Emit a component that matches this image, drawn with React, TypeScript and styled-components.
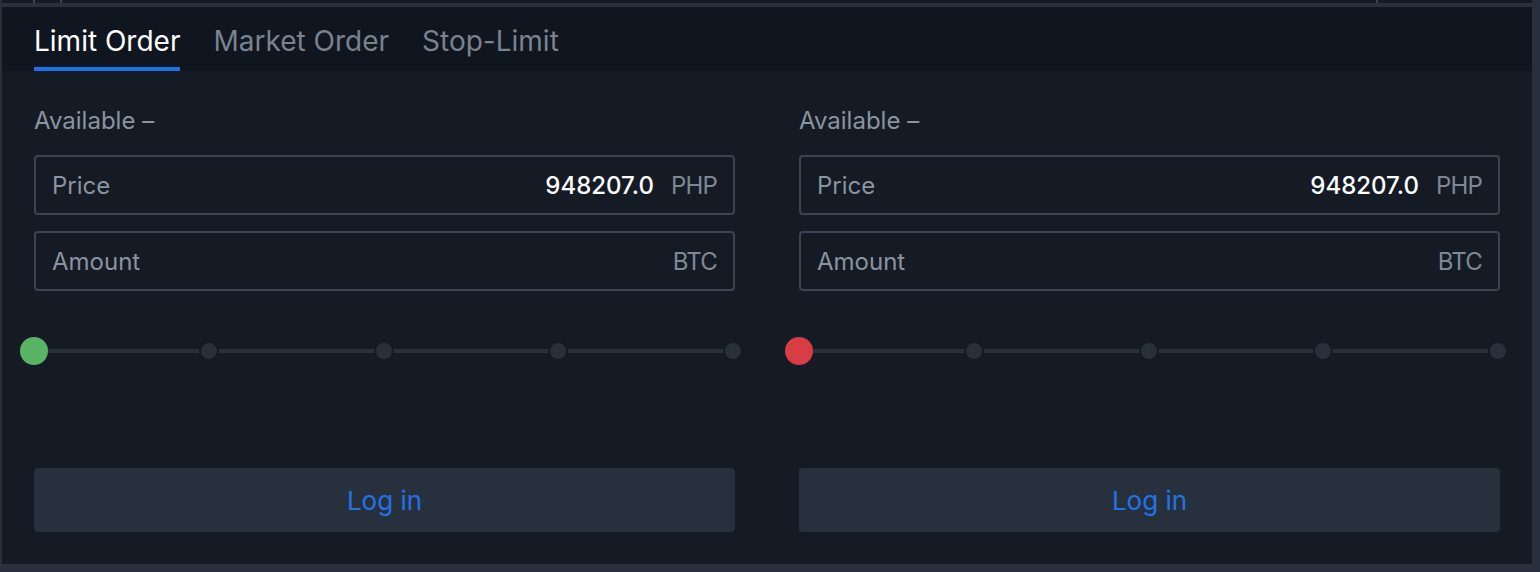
import React from "react"
import styled, { createGlobalStyle } from "styled-components"

const GlobalStyle = createGlobalStyle`
  html, body {
    margin: 0;
    padding: 0;
    background: #27303c;
    font-family: Inter, "Noto Sans", "Liberation Sans", sans-serif;
  }
  * {
    box-sizing: border-box;
  }
`

const tabs = ["Limit Order", "Market Order", "Stop-Limit"]

const OrderColumn: React.FC<{ side: "buy" | "sell" }> = ({ side }) => {
  return (
    <Column>
      <Available>Available –</Available>
      <Field>
        <FieldLabel>Price</FieldLabel>
        <FieldValue>948207.0</FieldValue>
        <FieldUnit>PHP</FieldUnit>
      </Field>
      <Field $gap>
        <FieldLabel>Amount</FieldLabel>
        <FieldUnit>BTC</FieldUnit>
      </Field>
      <Track>
        <Thumb $side={side} />
        <Stop />
        <Stop />
        <Stop />
        <Stop />
      </Track>
      <LoginBtn>Log in</LoginBtn>
    </Column>
  )
}

const App: React.FC = () => {
  return (
    <Page>
      <GlobalStyle />
      <TopStrip>
        <Mark $left={31} />
        <Mark $left={25} />
        <Mark $left={1314} />
      </TopStrip>
      <Panel>
        <TabBar>
          {tabs.map((t, i) => (
            <Tab key={t} $active={i === 0}>
              {t}
            </Tab>
          ))}
        </TabBar>
        <Body>
          <OrderColumn side="buy" />
          <OrderColumn side="sell" />
        </Body>
      </Panel>
    </Page>
  )
}

const Page = styled.div`
  width: 1540px;
  height: 572px;
  padding: 0 8px 8px 2px;
  display: flex;
  flex-direction: column;
  gap: 4px;
  background: #27303c;
`

const TopStrip = styled.div`
  height: 3px;
  background: #131a23;
  display: flex;
`

const Mark = styled.div<{ $left: number }>`
  width: 2px;
  height: 3px;
  margin-left: ${(p) => p.$left}px;
  background: #3a4350;
`

const Panel = styled.div`
  flex: 1;
  background: #141b25;
  display: flex;
  flex-direction: column;
`

const TabBar = styled.div`
  height: 64px;
  background: #0f1620;
  display: flex;
  gap: 33px;
  padding-left: 32px;
`

const Tab = styled.div<{ $active?: boolean }>`
  height: 100%;
  display: flex;
  align-items: center;
  padding: 8px 0 0 0;
  font-size: 28px;
  color: ${(p) => (p.$active ? "#ffffff" : "#7a828e")};
  border-bottom: 4px solid ${(p) => (p.$active ? "#1f6fe6" : "transparent")};
`

const Body = styled.div`
  flex: 1;
  padding: 34px 32px 32px 32px;
  display: grid;
  grid-template-columns: 1fr 1fr;
  gap: 64px;
`

const Column = styled.div`
  display: flex;
  flex-direction: column;
`

const Available = styled.div`
  height: 32px;
  line-height: 32px;
  font-size: 24px;
  color: #8b939e;
  margin-bottom: 18px;
`

const Field = styled.div<{ $gap?: boolean }>`
  height: 60px;
  border: 2px solid #3a4452;
  border-radius: 4px;
  display: flex;
  align-items: center;
  padding: 0 16px;
  font-size: 24px;
  margin-top: ${(p) => (p.$gap ? "16px" : "0")};
`

const FieldLabel = styled.span`
  flex: 1;
  color: #8b939e;
`

const FieldValue = styled.span`
  color: #ffffff;
  font-weight: 500;
  margin-right: 17px;
`

const FieldUnit = styled.span`
  color: #7e8895;
  letter-spacing: -0.8px;
`

const Track = styled.div`
  height: 28px;
  margin: 46px 2px 0 0;
  display: flex;
  align-items: center;
  justify-content: space-between;
  background: linear-gradient(#27303b, #27303b) center / 100% 4px no-repeat;
`

const Stop = styled.div`
  width: 20px;
  height: 20px;
  margin: 0 -10px;
  border-radius: 50%;
  border: 2px solid #141b25;
  background: #27303b;
`

const Thumb = styled.div<{ $side: "buy" | "sell" }>`
  width: 28px;
  height: 28px;
  margin: 0 -14px;
  border-radius: 50%;
  background: ${(p) => (p.$side === "buy" ? "#58b365" : "#d83c45")};
  position: relative;
  z-index: 1;
`

const LoginBtn = styled.button`
  margin-top: 103px;
  height: 64px;
  padding-top: 2px;
  border: none;
  border-radius: 4px;
  background: #27313d;
  color: #2472e8;
  font-family: inherit;
  font-size: 26px;
  cursor: pointer;
`

export default App
